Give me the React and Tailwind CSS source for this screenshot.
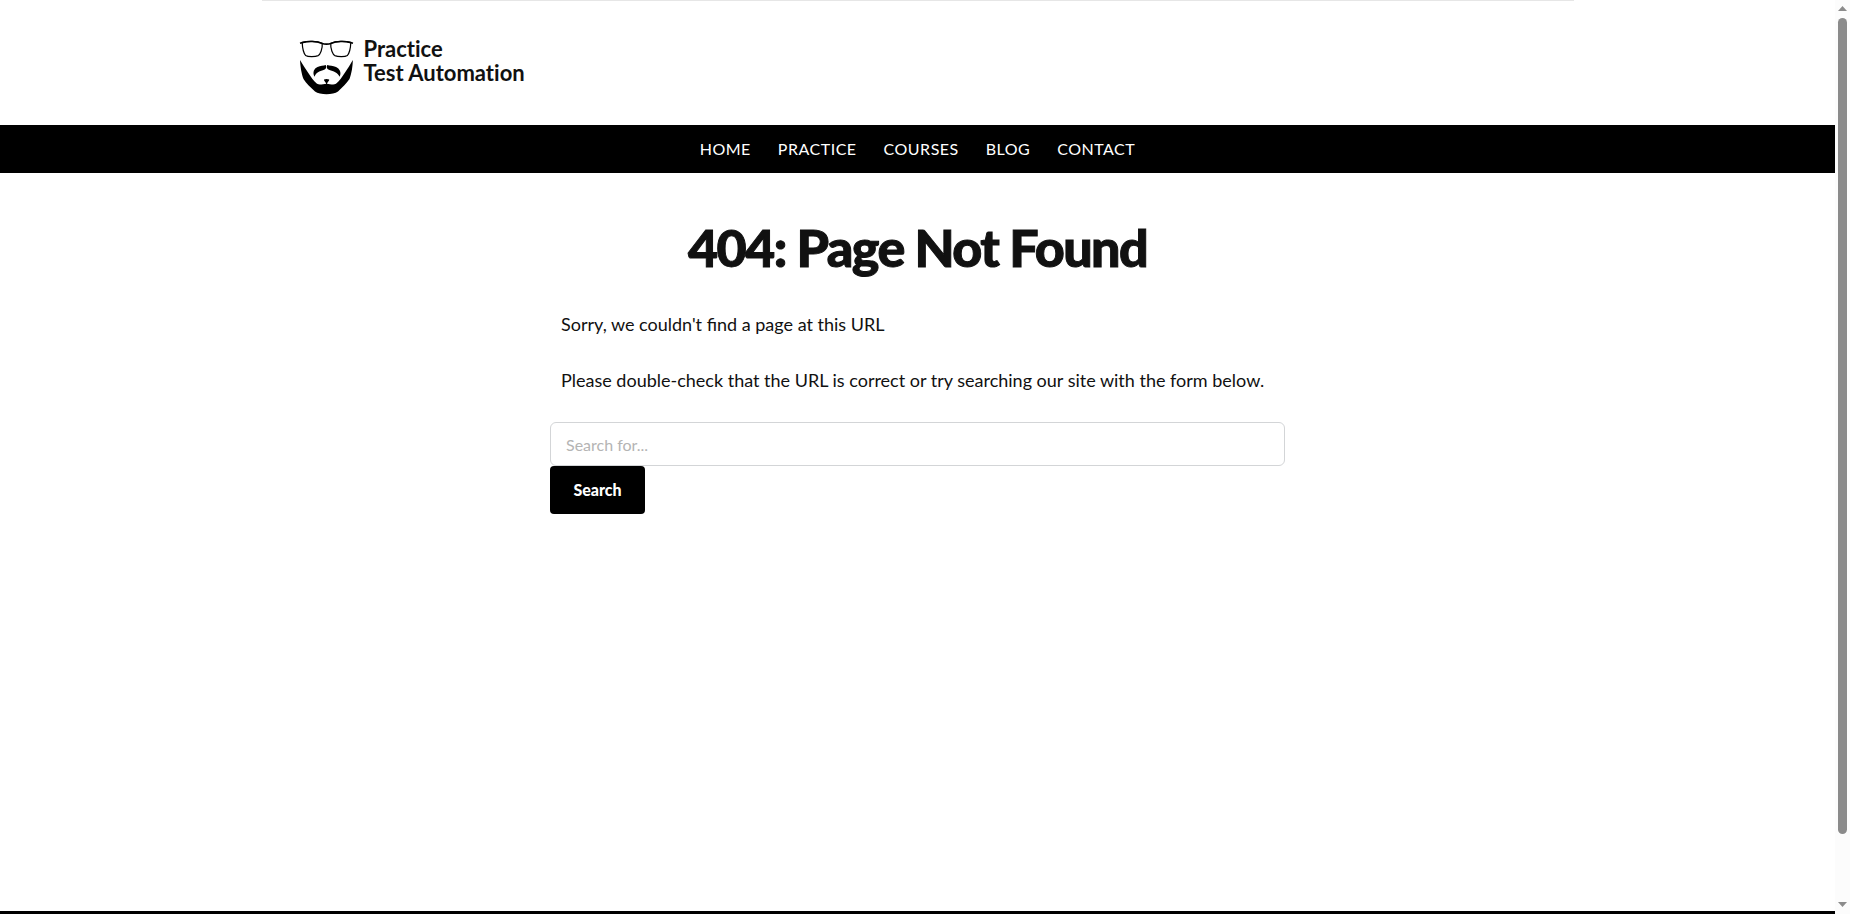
const links = ["Home", "Practice", "Courses", "Blog", "Contact"];

function Logo() {
  return (
    <svg viewBox="0 0 80 75" className="h-[75px] w-20 shrink-0" aria-hidden="true">
      <g fill="none" stroke="#000" strokeWidth="1.2" strokeLinejoin="round">
        <path d="M12.2 12.6C17 10.8 27 10.8 32.2 13.2C32.8 19 30 24.5 28.2 25.6C25 27 18 27 15.6 25.5C13.6 23 12.4 17 12.2 12.6Z" />
        <path d="M60.8 12.6C56 10.8 46 10.8 40.8 13.2C40.2 19 43 24.5 44.8 25.6C48 27 55 27 57.4 25.5C59.4 23 60.6 17 60.8 12.6Z" />
        <path d="M10 13.3L13 12.4C18 11 27 11.2 31.5 13.2Q36.500 15 41.500 13.2C46 11.200 55 11 60 12.400L63 13.300" strokeWidth="1.700" />
      </g>
      <path d="M10 30L14 36.500L19 44C21 47 23 50.500 27 53.800C30 55.500 33 53.700 36.500 53.700S43 55.500 46 53.800C50 50.500 52 47 54 44L59 36.500L62.800 30C62.800 36 61.500 44 59.500 49C56.500 53.500 52 57.500 48 61.500C43 65 30 65 25 61.500C21 57.500 16 53.500 13.500 49C11.500 44 10.300 36 10 30Z" />
      <path d="M35.800 35C36.800 37.500 36 39.300 33.500 40C29.500 41 26 42.500 24.600 46.800C22.200 42.500 24 38.500 27.500 37C30.500 35.800 33.500 35.800 35.800 35Z" />
      <path d="M37.200 35C36.200 37.500 37 39.300 39.500 40C43.500 41 47.500 42.500 49.600 46.800C51.800 42.500 49.500 38.500 46 37C43 35.800 39.500 35.800 37.200 35Z" />
      <path d="M34 49.400Q36.500 48.400 39.200 49.400C39.400 51 37.800 51.500 37.200 53L37 55.500H36.200L36 53C35.300 51.500 33.800 51 34 49.400Z" />
    </svg>
  );
}

function ScrollBar() {
  return (
    <div className="flex w-[15px] shrink-0 flex-col items-center bg-[#fcfcfc]" aria-hidden="true">
      <svg viewBox="0 0 15 18" className="h-[18px] w-[15px]">
        <path d="M3 11L7.500 6L12 11Z" fill="#8b8b8b" />
      </svg>
      <div className="w-[9px] flex-1 rounded-full bg-[#8b8b8b]" />
      <svg viewBox="0 0 15 80" className="h-20 w-[15px]">
        <path d="M3 68L7.500 73L12 68Z" fill="#8b8b8b" />
      </svg>
    </div>
  );
}

export default function App() {
  return (
    <div className="flex min-h-screen bg-white font-['Lato',sans-serif] text-[#111]">
      <div className="flex min-w-0 flex-1 flex-col">
        <header>
          <div className="mx-auto max-w-[1312px] border-t border-[#e6e6e6] px-7 pt-[29px] pb-5">
            <a href="#home" className="flex w-fit items-start">
              <Logo />
              <span className="-ml-[6px] pt-[7px] text-[22px] leading-6 font-bold [font-variant-ligatures:none]">
                Practice
                <br />
                Test Automation
              </span>
            </a>
          </div>
          <nav className="bg-black">
            <ul className="flex h-12 items-center justify-center gap-[27px]">
              {links.map((label) => (
                <li key={label}>
                  <a href={"#" + label.toLowerCase()} className="text-base tracking-[0.5px] text-white uppercase">
                    {label}
                  </a>
                </li>
              ))}
            </ul>
          </nav>
        </header>
        <main className="mx-auto w-full max-w-[735px] flex-1 pt-[46px]">
          <h1 className="text-center text-[52px] leading-14 font-black tracking-[-0.03em] [-webkit-text-stroke:1px_#111]">
            404: Page Not Found
          </h1>
          <div className="px-[11px] pt-[33px] text-lg leading-8">
            <p>Sorry, we couldn't find a page at this URL</p>
            <p className="mt-6">Please double-check that the URL is correct or try searching our site with the form below.</p>
          </div>
          <form className="pt-[26px]" onSubmit={(event) => event.preventDefault()}>
            <input
              type="search"
              aria-label="Search for"
              placeholder="Search for..."
              className="block h-11 w-full rounded-md border border-[#d3d5d7] px-[15px] text-base placeholder:text-[#b4b4b4]"
            />
            <button type="submit" className="h-12 w-[95px] rounded bg-black text-base font-black text-white">
              Search
            </button>
          </form>
        </main>
        <footer className="h-[3px] bg-black" />
      </div>
      <ScrollBar />
    </div>
  );
}
